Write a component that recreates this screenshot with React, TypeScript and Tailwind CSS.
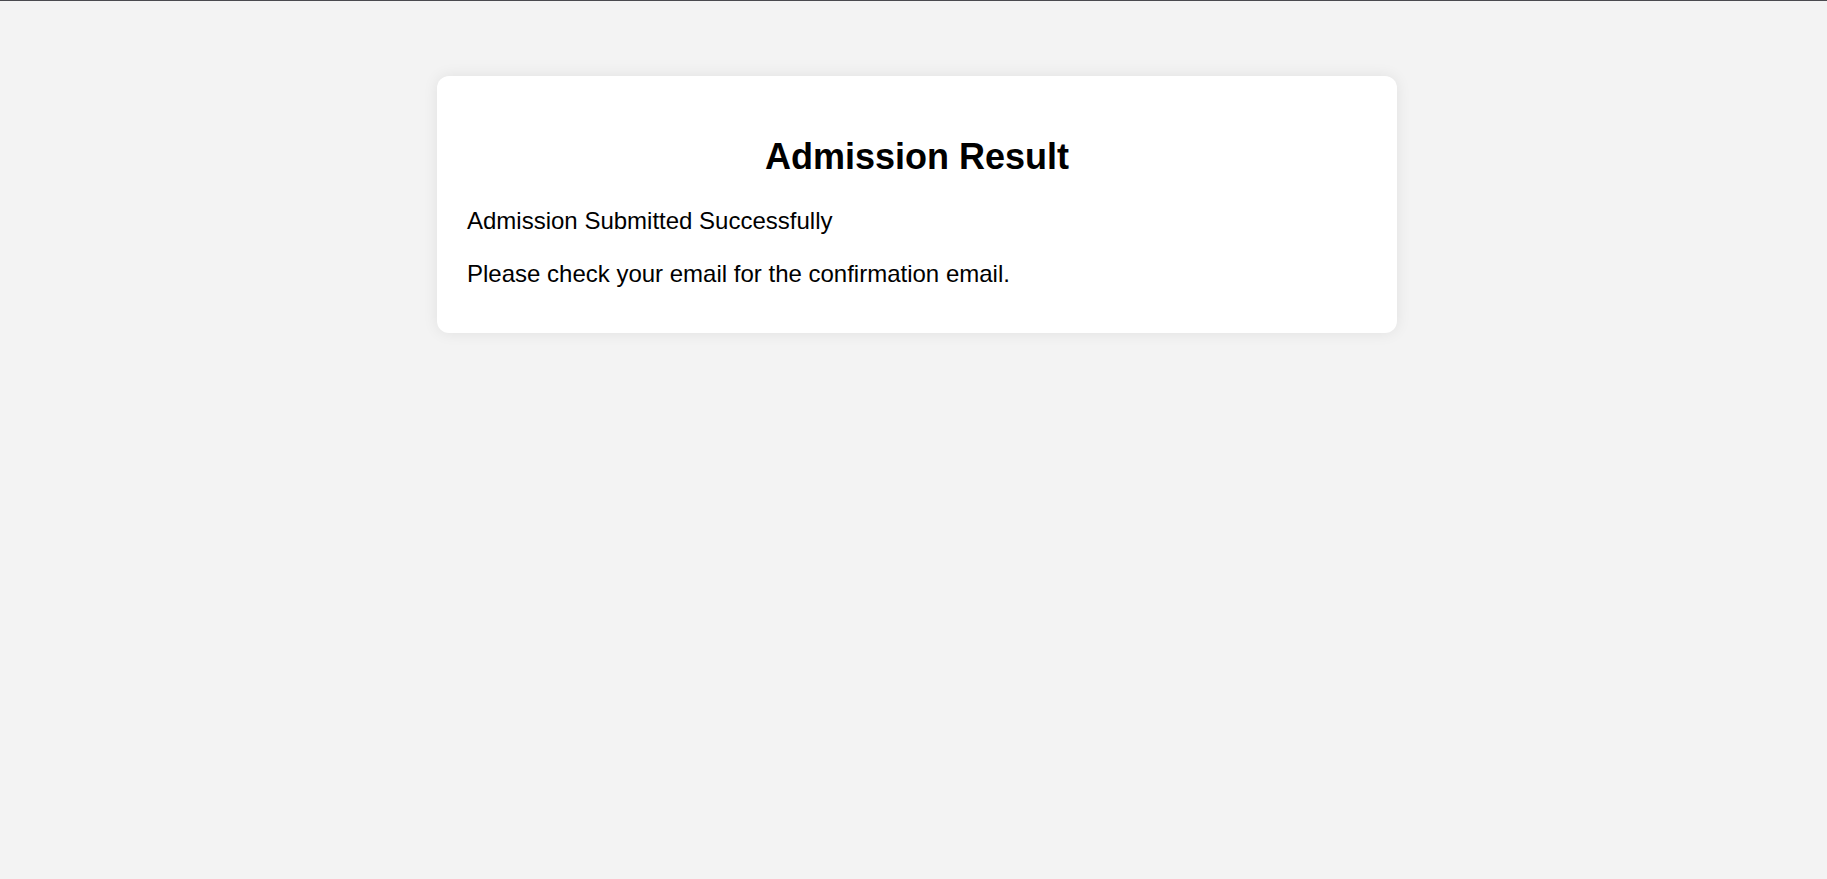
export default function App() {
  return (
    <div
      className="min-h-screen w-full bg-[#f3f3f3] border-t border-[#4a4a4f] pt-[75px] pl-[7px] flex justify-center items-start"
      style={{ fontFamily: '"Liberation Sans", Arial, sans-serif' }}
    >
      <div className="w-[960px] bg-white rounded-[12px] shadow-[0_0_15px_rgba(0,0,0,0.08)] pt-[30px] px-[30px] pb-[46px] text-black">
        <h2 className="mt-[30px] text-center text-[36px] leading-[41px] font-bold">
          Admission Result
        </h2>
        <p className="mt-[30px] text-[24px] leading-[27.6px]">
          Admission Submitted Successfully
        </p>
        <p className="mt-[25px] text-[24px] leading-[27.6px]">
          Please check your email for the confirmation email.
        </p>
      </div>
    </div>
  );
}
